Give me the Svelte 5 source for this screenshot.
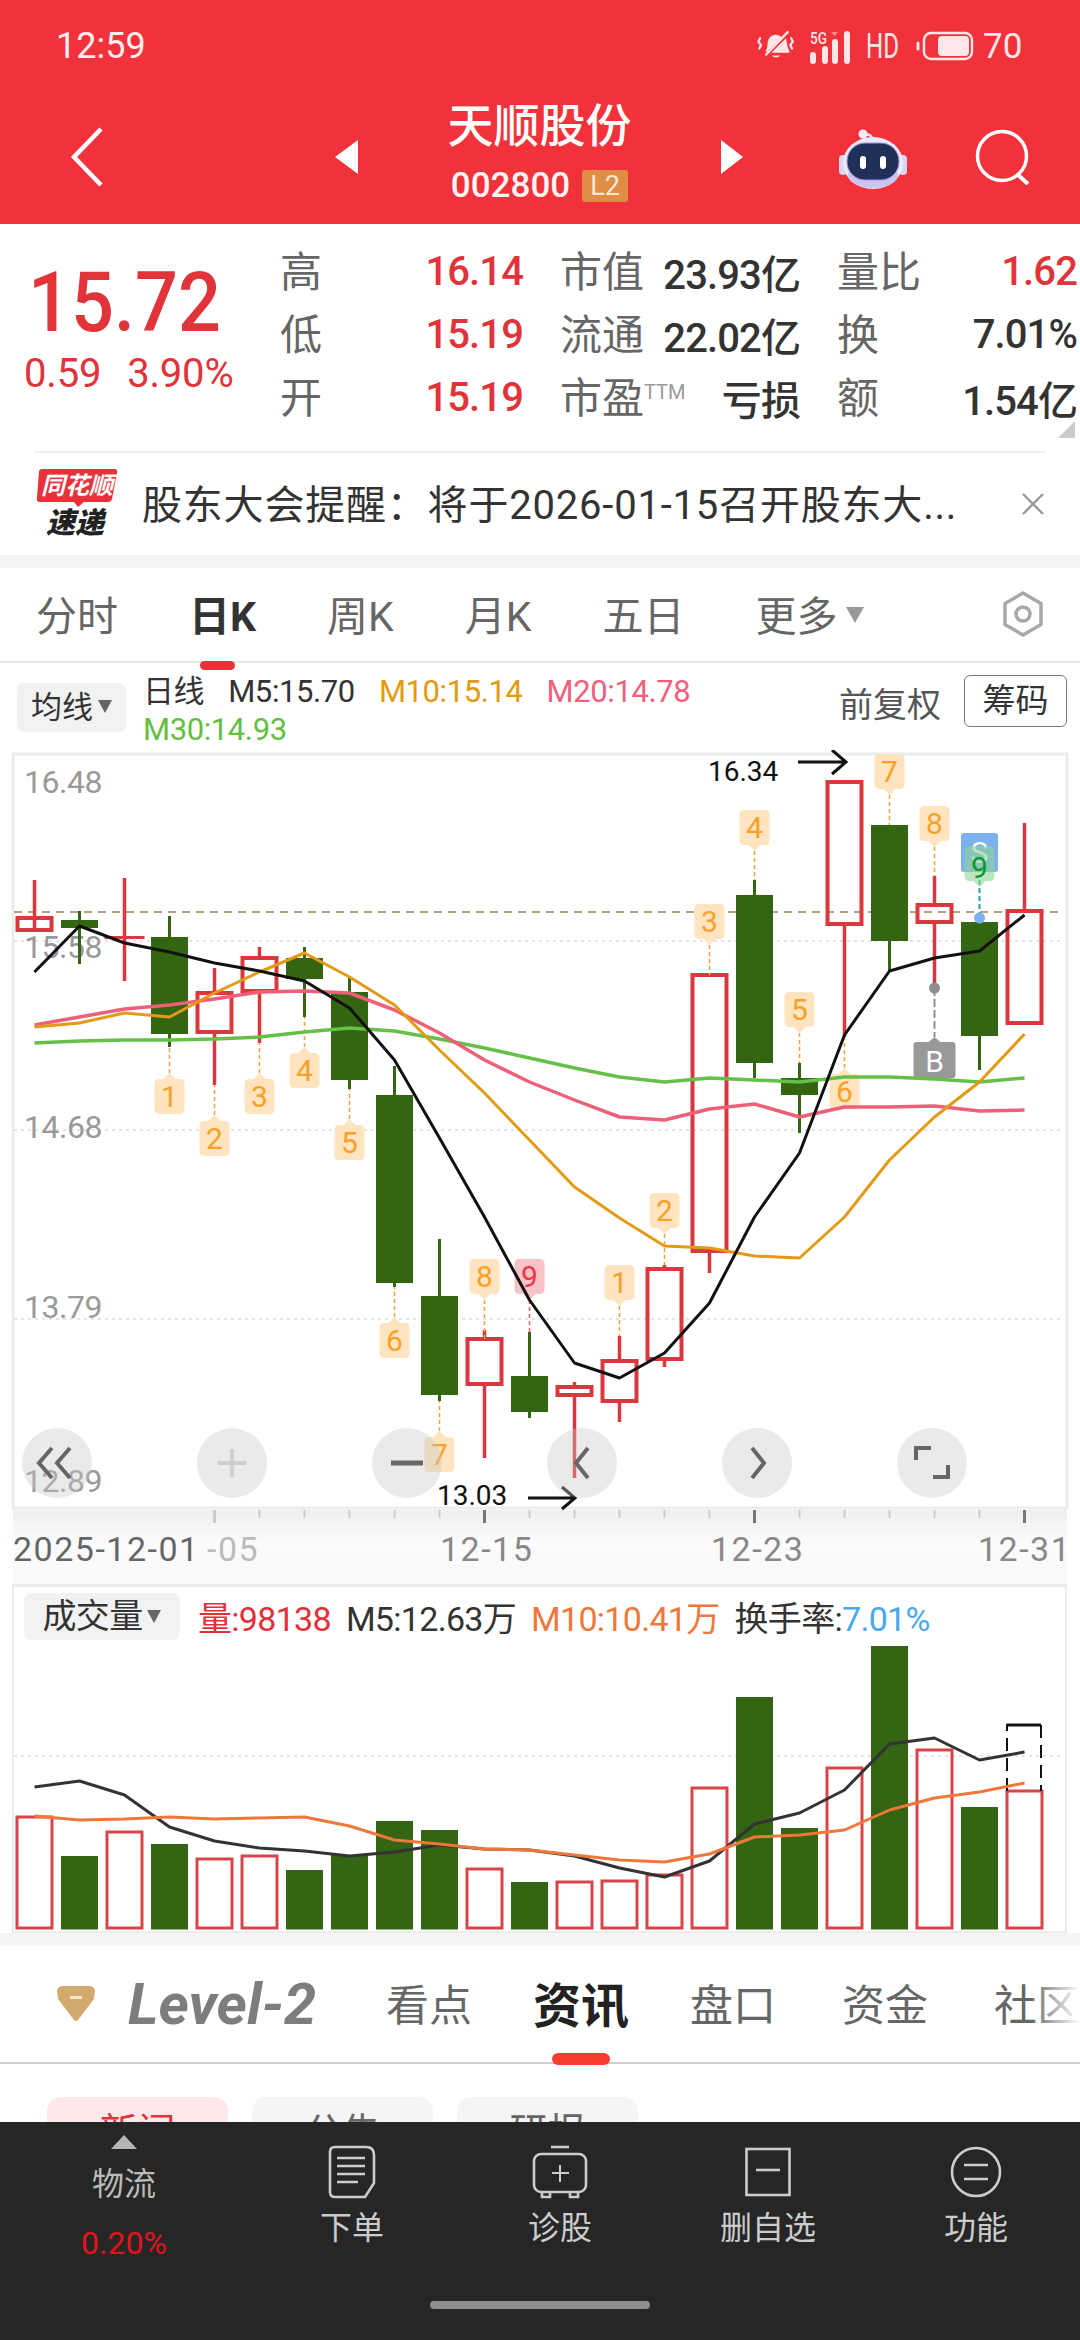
<script>
	const xs = (i) => 34.5 + 45 * i;

	// [bodyTop, bodyBottom, wickTop, wickBottom, isUp]
	const candles = [
		[918, 930, 880, 918, 1], [920, 928, 911, 964, 0], [936, 939, 878, 981, 2], [937, 1034, 916, 1047, 0],
		[993, 1032, 968, 1085, 1], [958, 991, 947, 1043, 1], [958, 979, 947, 1017, 0], [992, 1080, 976, 1089, 0],
		[1095, 1283, 1066, 1287, 0], [1296, 1395, 1239, 1401, 0], [1339, 1384, 1330, 1458, 1], [1376, 1412, 1332, 1418, 0],
		[1387, 1395, 1382, 1478, 1], [1361, 1401, 1336, 1422, 1], [1269, 1359, 1265, 1367, 1], [975, 1251, 975, 1273, 1],
		[895, 1063, 880, 1078, 0], [1078, 1095, 1063, 1133, 0], [782, 924, 782, 1037, 1], [825, 941, 825, 971, 0],
		[905, 922, 876, 987, 1], [922, 1036, 913, 1070, 0], [911, 1023, 823, 1023, 1]
	];

	const line = (ys) => ys.map((y, i) => `${xs(i)},${y}`).join(' ');

	const ma5 = [972, 926, 943, 952, 963, 971, 981, 1008, 1060, 1138, 1217, 1300, 1363, 1378, 1353, 1303, 1217, 1153, 1035, 971, 958, 951, 915];
	const ma10 = [1027, 1023, 1013, 1017, 993, 972, 953, 977, 1005, 1050, 1093, 1140, 1187, 1218, 1246, 1248, 1256, 1258, 1217, 1160, 1117, 1082, 1034];
	const ma20 = [1025, 1017, 1009, 1005, 999, 992, 991, 993, 1010, 1033, 1060, 1082, 1100, 1117, 1120, 1109, 1104, 1117, 1107, 1107, 1106, 1111, 1110];
	const ma30 = [1043, 1041, 1040, 1040, 1039, 1037, 1032, 1028, 1031, 1039, 1048, 1058, 1068, 1077, 1082, 1078, 1080, 1082, 1077, 1077, 1079, 1082, 1078];

	// [index, label, tip y, dotted line other end, pointing up]
	const tags = [
		[3, 1, 1073, 1047, true], [4, 2, 1115, 1085, true], [5, 3, 1073, 1043, true], [6, 4, 1047, 1017, true],
		[7, 5, 1119, 1089, true], [8, 6, 1317, 1287, true], [9, 7, 1431, 1401, true], [18, 6, 1068, 1037, true],
		[10, 8, 1300, 1339, false], [13, 1, 1306, 1336, false], [14, 2, 1234, 1265, false], [15, 3, 945, 975, false],
		[16, 4, 851, 880, false], [17, 5, 1033, 1063, false], [19, 7, 795, 825, false], [20, 8, 847, 876, false]
	];

	function tagPath(x, tip, up) {
		const l = x - 15, r = x + 15;
		if (up) {
			const t = tip + 6, b = tip + 41;
			return `M${x} ${tip}L${x + 6} ${t}H${r - 5}Q${r} ${t} ${r} ${t + 5}V${b - 5}Q${r} ${b} ${r - 5} ${b}H${l + 5}Q${l} ${b} ${l} ${b - 5}V${t + 5}Q${l} ${t} ${l + 5} ${t}H${x - 6}Z`;
		}
		const b = tip - 6, t = tip - 41;
		return `M${x} ${tip}L${x + 6} ${b}H${r - 5}Q${r} ${b} ${r} ${b - 5}V${t + 5}Q${r} ${t} ${r - 5} ${t}H${l + 5}Q${l} ${t} ${l} ${t + 5}V${b - 5}Q${l} ${b} ${l + 5} ${b}H${x - 6}Z`;
	}

	const grid = [941, 1130, 1319];
	const prices = [['16.48', 782], ['15.58', 947], ['14.68', 1127], ['13.79', 1307], ['12.89', 1481]];

	const tabs = ['分时', '日K', '周K', '月K', '五日'];
	const quotes = [
		{ a: '高', b: '16.14', c: '市值', d: '23.93亿', e: '量比', f: '1.62', red: true },
		{ a: '低', b: '15.19', c: '流通', d: '22.02亿', e: '换', f: '7.01%' },
		{ a: '开', b: '15.19', c: '市盈', ttm: true, d: '亏损', e: '额', f: '1.54亿' }
	];

	// volume bars: [top, isUp]
	const vols = [1817, 1856, 1832, 1844, 1859, 1856, 1870, 1855, 1821, 1830, 1869, 1882, 1882, 1881, 1875, 1788, 1697, 1828, 1768, 1646, 1750, 1807, 1791];
	const volUp = [1, 0, 1, 0, 1, 1, 0, 0, 0, 0, 1, 0, 1, 1, 1, 1, 0, 0, 1, 0, 1, 0, 1];
	const volM5 = [1787, 1781, 1795, 1827, 1841, 1848, 1851, 1856, 1852, 1845, 1849, 1850, 1856, 1868, 1877, 1861, 1824, 1813, 1790, 1744, 1738, 1760, 1752];
	const volM10 = [1816, 1820, 1819, 1817, 1819, 1818, 1817, 1826, 1840, 1844, 1849, 1850, 1855, 1860, 1862, 1854, 1837, 1835, 1830, 1810, 1798, 1792, 1783];

	const lowerTabs = ['看点', '资讯', '盘口', '资金'];
</script>

<div class="page">
	<header class="top">
		<div class="status">
			<span class="time">12:59</span>
			<svg class="status-icons" width="290" height="40" viewBox="0 0 290 40">
				<g transform="translate(17 1) scale(0.86)">
					<g fill="none" stroke="#ffe6e8" stroke-width="2.6" stroke-linecap="round">
						<path d="M6 13l-2 4 3 4-2 4" />
						<path d="M42 13l2 4-3 4 2 4" />
						<path d="M13 32L38 6" stroke-width="2.8" />
					</g>
					<path d="M12 28c3-3 2-6 3-11 1-5 5-8 9-8 3 0 5 1 7 3L14 29zM19 30l17-17c1 3 1 9 4 15v2z" fill="#ffe6e8" />
					<path d="M20 33h9c-1 3-8 3-9 0z" fill="#ffe6e8" />
				</g>
				<text x="72" y="18" class="tiny" textLength="17" lengthAdjust="spacingAndGlyphs">5G</text>
				<path d="M93 6h7l-3.500 4z" fill="#ff8b90" />
				<rect x="72" y="26" width="6" height="12" rx="3" fill="#ffe6e8" />
				<rect x="84" y="20" width="6" height="18" rx="3" fill="#ffe6e8" />
				<rect x="94" y="13" width="6" height="25" rx="3" fill="#ffe6e8" />
				<rect x="106" y="5" width="6" height="33" rx="3" fill="#ffe6e8" />
				<text x="128" y="32" class="hd" textLength="33" lengthAdjust="spacingAndGlyphs">HD</text>
				<path d="M180 17v6" stroke="#ffe6e8" stroke-width="3" stroke-linecap="round" />
				<rect x="186" y="7" width="48" height="26" rx="7" fill="none" stroke="#ffe6e8" stroke-width="2.4" />
				<rect x="200" y="10" width="31" height="20" rx="4" fill="#ffe6e8" />
				<text x="245" y="32" class="hd">70</text>
			</svg>
		</div>
		<nav class="nav">
			<svg class="back" width="34" height="60" viewBox="0 0 34 60">
				<path d="M31 2L4 30l27 28" fill="none" stroke="#fff" stroke-width="4.500" />
			</svg>
			<span class="tri left"></span>
			<div class="title">
				<div class="name">天顺股份</div>
				<div class="code"><span>002800</span><span class="l2">L2</span></div>
			</div>
			<span class="tri right"></span>
			<svg class="robot" width="68" height="62" viewBox="0 0 68 62">
				<path d="M25 10c3-4 7-3 9 3" fill="none" stroke="#eadff5" stroke-width="2.500" />
				<circle cx="24" cy="7" r="4.500" fill="#f1ecfa" />
				<rect x="0" y="28" width="8" height="20" rx="4" fill="#d9d5f2" />
				<rect x="60" y="28" width="8" height="20" rx="4" fill="#d9d5f2" />
				<ellipse cx="34" cy="36" rx="30" ry="26" fill="#ecebfb" />
				<ellipse cx="34" cy="48" rx="25" ry="13" fill="#c9c5ef" />
				<rect x="8" y="16" width="52" height="37" rx="18" fill="#1f3158" stroke="#b28ce8" stroke-width="1" />
				<rect x="21" y="29" width="6" height="13" rx="3" fill="#fff" />
				<rect x="41" y="29" width="6" height="13" rx="3" fill="#fff" />
			</svg>
			<svg class="search" width="56" height="56" viewBox="0 0 56 56">
				<circle cx="27" cy="27" r="24.500" fill="none" stroke="#fff" stroke-width="3.500" />
				<path d="M42 45l11 10" stroke="#fff" stroke-width="4" />
			</svg>
		</nav>
	</header>

	<section class="quote">
		<div class="price">
			<div class="big">15.72</div>
			<div class="change"><span>0.59</span><span>3.90%</span></div>
		</div>
		<div class="cells">
			{#each quotes as q}
				<div class="cell"><span class="lab">{q.a}</span><span class="val red">{q.b}</span></div>
				<div class="cell">
					<span class="lab">{q.c}{#if q.ttm}<sup>TTM</sup>{/if}</span><span class="val">{q.d}</span>
				</div>
				<div class="cell"><span class="lab">{q.e}</span><span class="val" class:red={q.red}>{q.f}</span></div>
			{/each}
		</div>
		<span class="corner"></span>
	</section>

	<section class="notice">
		<svg class="logo" width="82" height="74" viewBox="0 0 82 74">
			<path d="M6 2H78Q82 2 81 6L76 32Q75 35 72 35H48L42 40L38 35H4Q0 35 1 31L3 5Q3 2 6 2Z" fill="#e8323a" />
			<text x="41" y="27" class="logo-a" text-anchor="middle">同花顺</text>
			<text x="39" y="66" class="logo-b" text-anchor="middle">速递</text>
		</svg>
		<span class="notice-text">股东大会提醒：将于2026-01-15召开股东大...</span>
		<svg class="close" width="24" height="24" viewBox="0 0 24 24">
			<path d="M2 2l20 20M22 2L2 22" stroke="#999" stroke-width="2.400" />
		</svg>
	</section>

	<div class="gap"></div>

	<section class="periods">
		{#each tabs as t, i}
			<span class="period" class:active={i === 1}>{t}</span>
		{/each}
		<span class="period more">更多<i></i></span>
		<svg class="gear" width="44" height="46" viewBox="0 0 44 46">
			<path d="M22 2l18 10.500v21L22 44 4 33.500v-21z" fill="none" stroke="#a8a8a8" stroke-width="3.500" stroke-linejoin="round" />
			<circle cx="22" cy="23" r="7" fill="none" stroke="#a8a8a8" stroke-width="3.500" />
		</svg>
	</section>

	<section class="legend">
		<div class="pill">均线<i></i></div>
		<div class="ma-values">
			<span class="dark cjk">日线</span>
			<span class="dark">M5:15.70</span>
			<span class="m10">M10:15.14</span>
			<span class="m20">M20:14.78</span>
			<span class="m30">M30:14.93</span>
		</div>
		<span class="adjust">前复权</span>
		<span class="chips-btn">筹码</span>
	</section>

	<div class="chart">
		<svg width="1080" height="834" viewBox="0 750 1080 834">
			<defs>
				<linearGradient id="fade" x1="0" y1="0" x2="0" y2="1">
					<stop offset="0" stop-color="#efefef" />
					<stop offset="0.45" stop-color="#fbfbfb" />
					<stop offset="1" stop-color="#f8f8f8" />
				</linearGradient>
			</defs>
			<rect x="13" y="1510" width="1054" height="74" fill="url(#fade)" />
			<rect x="13" y="754" width="1054" height="754" fill="#fff" stroke="#ececec" stroke-width="3" />

			{#each grid as y}
				<line x1="14" x2="1064" y1={y} y2={y} class="grid" />
			{/each}
			<line x1="14" x2="1064" y1="912" y2="912" class="last" />

			{#each prices as [label, y]}
				<text x="24" y={y + 11} class="axis">{label}</text>
			{/each}

			{#each candles as [top, bottom, wt, wb, up], i}
				{#if up === 0}
					<line x1={xs(i)} x2={xs(i)} y1={wt} y2={wb} class="wick-down" />
					<rect x={xs(i) - 18.5} y={top} width="37" height={bottom - top} fill="#336513" />
				{:else if up === 2}
					<line x1={xs(i)} x2={xs(i)} y1={wt} y2={wb} class="wick-up" />
					<rect x={xs(i) - 20} y={top} width="40" height={bottom - top} fill="#d9383e" />
				{:else}
					<line x1={xs(i)} x2={xs(i)} y1={wt} y2={top} class="wick-up" />
					<line x1={xs(i)} x2={xs(i)} y1={bottom} y2={wb} class="wick-up" />
					<rect x={xs(i) - 17} y={top} width="34" height={bottom - top} class="hollow" />
				{/if}
			{/each}

			{#each tags as [i, n, tip, end, up]}
				<line x1={xs(i)} x2={xs(i)} y1={tip} y2={end} class="dots" />
				<path d={tagPath(xs(i), tip, up)} fill="#ffe4bf" />
				<text x={xs(i)} y={up ? tip + 34 : tip - 13} class="tag-num">{n}</text>
			{/each}

			<line x1={xs(11)} x2={xs(11)} y1="1300" y2="1332" class="dots pink" />
			<path d={tagPath(xs(11), 1300, false)} fill="#f7c3c7" />
			<text x={xs(11)} y="1287" class="tag-num pink-num">9</text>

			<line x1={xs(20)} x2={xs(20)} y1="988" y2="1037" class="b-line" />
			<circle cx={xs(20)} cy="988" r="5.500" fill="#8f8f8f" />
			<path d="M{xs(20)} 1037l6 5h12q3 0 3 3v30q0 3-3 3h-36q-3 0-3-3v-30q0-3 3-3h12z" fill="#999" />
			<text x={xs(20)} y="1072" class="tag-num white">B</text>

			<line x1={xs(21)} x2={xs(21)} y1="880" y2="918" class="s-line" />
			<circle cx={xs(21)} cy="918" r="5.500" fill="#7db0ef" />
			<rect x="961" y="833" width="37" height="39" rx="3" fill="#7db0ef" />
			<text x={xs(21)} y="863" class="tag-num white">S</text>
			<path d={tagPath(xs(21), 887, false)} fill="#8fd694" opacity="0.6" />
			<text x={xs(21)} y="878" class="tag-num nine">9</text>

			<polyline points={line(ma30)} class="ma g30" />
			<polyline points={line(ma20)} class="ma p20" />
			<polyline points={line(ma10)} class="ma o10" />
			<polyline points={line(ma5)} class="ma k5" />

			<text x="708" y="781" class="mark">16.34</text>
			<path d="M798 762h46M832 750l14 12-14 12" class="arrow" />
			<text x="437" y="1505" class="mark">13.03</text>
			<path d="M528 1498h46M562 1487l13 11-13 11" class="arrow" />

			{#each [57, 232, 407, 582, 757, 932] as cx}
				<circle {cx} cy="1463" r="35" fill="#c8c8c8" opacity="0.38" />
			{/each}
			<path d="M52 1448l-13 15 13 15M70 1448l-13 15 13 15" class="ctl" />
			<path d="M232 1449v28M218 1463h28" class="ctl soft" />
			<path d="M391 1463h32" class="ctl thick" />
			<path d="M588 1448l-12 15 12 15" class="ctl" />
			<path d="M752 1448l12 15-12 15" class="ctl" />
			<path d="M916 1460v-12h15M948 1465v12h-15" class="ctl" />

			{#each candles as _, i}
				{#if i >= 4}
					<line x1={xs(i)} x2={xs(i)} y1="1510" y2="1518" class="tick" />
				{/if}
			{/each}
			<line x1={xs(4)} x2={xs(4)} y1="1510" y2="1523" class="tick-big soft" />
			{#each [10, 16, 22] as i}
				<line x1={xs(i)} x2={xs(i)} y1="1510" y2="1523" class="tick-big" />
			{/each}
			<text x="13" y="1561" class="date dark-date">2025-12-01</text>
			<text x="207" y="1561" class="date soft-date">-05</text>
			<text x="440" y="1561" class="date">12-15</text>
			<text x="711" y="1561" class="date">12-23</text>
			<text x="978" y="1561" class="date">12-31</text>
		</svg>
	</div>

	<section class="volume">
		<div class="vol-legend">
			<div class="pill vol-pill">成交量<i></i></div>
			<span class="v-red">量:98138</span>
			<span class="dark">M5:12.63万</span>
			<span class="v-orange">M10:10.41万</span>
			<span class="dark">换手率:<b>7.01%</b></span>
		</div>
		<svg width="1051" height="285" viewBox="14 1646 1051 285">
			<line x1="14" x2="1064" y1="1756" y2="1756" class="grid" />
			{#each vols as top, i}
				{#if volUp[i]}
					<rect x={xs(i) - 17.500} y={top} width="35" height={1928 - top} class="vol-hollow" />
				{:else}
					<rect x={xs(i) - 18.500} y={top} width="37" height={1929.500 - top} fill="#336513" />
				{/if}
			{/each}
			<path d="M1007 1791v-66h34v66" fill="none" stroke="#111" stroke-width="2" stroke-dasharray="13 7" />
			<line x1="1007" x2="1041" y1="1725" y2="1725" stroke="#111" stroke-width="3" />
			<polyline points={line(volM5)} class="ma v5" />
			<polyline points={line(volM10)} class="ma v10" />
		</svg>
	</section>

	<div class="gap"></div>

	<section class="lower-tabs">
		<svg class="diamond" width="40" height="36" viewBox="0 0 40 36">
			<path d="M7 0H33Q38 0 39 5L38 13L22 34Q20 36 18 34L2 13L1 5Q2 0 7 0Z" fill="#d2aa6e" />
			<rect x="14" y="10" width="12" height="3" fill="#f5e6cc" />
		</svg>
		<span class="level">Level-2</span>
		{#each lowerTabs as t, i}
			<span class="l-tab" class:on={i === 1}><span class="l-text">{t}</span></span>
		{/each}
		<span class="l-tab"><span class="l-text">社区</span></span>
	</section>

	<section class="chips">
		<span class="chip hot">新闻</span>
		<span class="chip">公告</span>
		<span class="chip">研报</span>
	</section>

	<footer class="bottom">
		<div class="actions">
			<div class="action ticker">
				<span class="up"></span>
				<span class="sector">物流</span>
				<span class="pct">0.20%</span>
			</div>
			<div class="action">
				<svg width="48" height="54" viewBox="0 0 48 54">
					<path d="M7 2H38Q46 2 46 10V38L37 52H7Q2 52 2 47V7Q2 2 7 2Z" class="ic" />
					<path d="M9 13h28M9 21h28M9 29h28M9 37h21" class="ic" />
				</svg>
				<span>下单</span>
			</div>
			<div class="action">
				<svg width="56" height="54" viewBox="0 0 56 54">
					<path d="M19 2h18" class="ic" />
					<rect x="2" y="9" width="52" height="38" rx="7" class="ic" />
					<path d="M28 20v17M20 28h17" class="ic thin" />
					<path d="M10 47v5h8v-5M38 47v5h8v-5" class="ic" />
				</svg>
				<span>诊股</span>
			</div>
			<div class="action">
				<svg width="46" height="54" viewBox="0 0 46 54">
					<rect x="1.500" y="4" width="43" height="46" class="ic" />
					<path d="M11 25h24" class="ic" />
				</svg>
				<span>删自选</span>
			</div>
			<div class="action">
				<svg width="52" height="54" viewBox="0 0 52 54">
					<circle cx="26" cy="27" r="24" class="ic" />
					<path d="M14 20h24M14 34h24" class="ic" />
				</svg>
				<span>功能</span>
			</div>
		</div>
		<div class="home-bar"></div>
	</footer>
</div>

<style>
	:global(body) {
		margin: 0;
		background: #fff;
	}

	.page {
		position: relative;
		width: 1080px;
		height: 2340px;
		overflow: hidden;
		background: #fff;
		font-family: Roboto, 'Noto Sans CJK SC', sans-serif;
		color: #333;
	}

	/* red header */
	.top {
		height: 224px;
		background: #f1323b;
		color: #fff;
	}

	.status {
		display: flex;
		justify-content: space-between;
		align-items: center;
		height: 92px;
		padding: 0 0 0 56px;
	}

	.time {
		font-size: 36px;
		color: #ffeef0;
	}

	.status-icons {
		margin-right: 52px;
	}

	.tiny {
		font: 500 17px Roboto, sans-serif;
		fill: #ffe6e8;
	}

	.hd {
		font: 400 35px Roboto, sans-serif;
		fill: #ffe6e8;
	}

	.nav {
		display: flex;
		align-items: flex-start;
		padding-left: 70px;
	}

	.back {
		margin-top: 35px;
	}

	.tri {
		width: 0;
		height: 0;
		margin-top: 48px;
		border-top: 17px solid transparent;
		border-bottom: 17px solid transparent;
	}

	.tri.left {
		margin-left: 231px;
		border-right: 23px solid #fff;
	}

	.tri.right {
		border-left: 22px solid #fff;
	}

	.title {
		width: 363px;
		text-align: center;
	}

	.name {
		margin-top: 2px;
		font-size: 46px;
		line-height: 64px;
		font-weight: 500;
		white-space: nowrap;
	}

	.code {
		display: flex;
		justify-content: center;
		align-items: center;
		gap: 12px;
		margin-top: 8px;
		font-size: 35px;
		font-weight: 500;
		line-height: 40px;
		color: #fff5f5;
	}

	.l2 {
		width: 46px;
		height: 32px;
		border-radius: 3px;
		background: #e08d46;
		color: #fde9d5;
		font-size: 27px;
		font-weight: 400;
		line-height: 32px;
	}

	.robot {
		margin: 35px 0 0 96px;
	}

	.search {
		margin: 37px 0 0 68px;
	}

	/* quote */
	.quote {
		position: relative;
		display: flex;
		height: 227px;
		padding-top: 16px;
		box-sizing: border-box;
	}

	.price {
		width: 280px;
		flex: none;
		color: #e0333a;
	}

	.big {
		margin: 16px 0 0 28px;
		font-size: 84px;
		line-height: 94px;
		font-weight: 500;
		white-space: nowrap;
		transform: scaleX(0.9);
		transform-origin: left center;
	}

	.change {
		display: flex;
		gap: 26px;
		margin: 2px 0 0 24px;
		font-size: 40px;
		line-height: 44px;
		letter-spacing: -0.2px;
		white-space: nowrap;
	}

	.cells {
		display: grid;
		grid-template-columns: 243px 240px 240px;
		grid-auto-rows: 63px;
		column-gap: 37px;
	}

	.cell {
		display: flex;
		justify-content: space-between;
		align-items: center;
		white-space: nowrap;
	}

	.lab {
		margin-bottom: 7px;
		font-size: 42px;
		color: #666;
	}

	.lab sup {
		font-size: 20px;
		color: #999;
		vertical-align: 14px;
		line-height: 0;
	}

	.val {
		font-size: 40px;
		font-weight: 500;
		color: #333;
		letter-spacing: -0.9px;
	}

	.val.red {
		color: #e0333a;
	}

	.corner {
		position: absolute;
		right: 5px;
		bottom: 13px;
		width: 0;
		height: 0;
		border-left: 17px solid transparent;
		border-bottom: 17px solid #ccc;
	}

	.notice {
		display: flex;
		align-items: center;
		height: 104px;
		margin: 0 35px;
		border-top: 2px solid #eee;
		box-sizing: border-box;
	}

	.logo {
		flex: none;
		margin: 0 0 0 1px;
	}

	.logo-a {
		font: italic 700 24px 'Noto Sans CJK SC', sans-serif;
		fill: #fff;
	}

	.logo-b {
		font: italic 900 29px 'Noto Sans CJK SC', sans-serif;
		fill: #222;
	}

	.notice-text {
		flex: 1;
		margin: 0 0 5px 24px;
		font-size: 40px;
		letter-spacing: 0.8px;
		color: #333;
		white-space: nowrap;
	}

	.close {
		flex: none;
	}

	.gap {
		height: 13px;
		background: #f5f5f5;
	}

	/* period tabs */
	.periods {
		display: flex;
		align-items: center;
		gap: 71px;
		height: 93px;
		padding-left: 36px;
		border-bottom: 2px solid #e8e8e8;
		position: relative;
		box-sizing: content-box;
	}

	.period {
		position: relative;
		margin-bottom: 4px;
		font-size: 41px;
		color: #666;
		white-space: nowrap;
	}

	.period.active {
		font-weight: 700;
		color: #333;
	}

	.period.active::after {
		content: '';
		position: absolute;
		left: 11px;
		bottom: -27px;
		width: 35px;
		height: 9px;
		border-radius: 5px;
		background: #e8323a;
	}

	.more i,
	.pill i {
		display: inline-block;
		width: 0;
		height: 0;
		margin-left: 8px;
		border-left: 9px solid transparent;
		border-right: 9px solid transparent;
		border-top: 16px solid #999;
		vertical-align: 8px;
	}

	.gear {
		position: absolute;
		left: 1001px;
		top: 23px;
	}

	/* legend */
	.legend {
		display: flex;
		align-items: flex-start;
		height: 87px;
		padding: 10px 13px 0 17px;
		box-sizing: border-box;
		font-size: 31px;
		white-space: nowrap;
	}

	.pill {
		flex: none;
		width: 109px;
		height: 49px;
		margin-top: 10px;
		border-radius: 7px;
		background: #f2f2f2;
		font-size: 31px;
		line-height: 49px;
		text-align: center;
		color: #333;
	}

	.pill i {
		margin-left: 5px;
		border-left-width: 7px;
		border-right-width: 7px;
		border-top-width: 13px;
		border-top-color: #666;
		vertical-align: 5px;
	}

	.ma-values {
		display: flex;
		flex-wrap: wrap;
		column-gap: 24px;
		width: 620px;
		margin-left: 17px;
		line-height: 38px;
		letter-spacing: -0.4px;
	}

	.ma-values .m30 {
		width: 100%;
		color: #62c03e;
	}

	.dark {
		color: #333;
	}

	.cjk {
		font-size: 31px;
	}

	.m10 {
		color: #e39a0c;
	}

	.m20 {
		color: #f05f7c;
	}

	.adjust {
		margin: 5px 0 0 auto;
		font-size: 34px;
		color: #555;
	}

	.chips-btn {
		flex: none;
		width: 103px;
		height: 52px;
		margin: 2px 0 0 23px;
		border: 1.5px solid #777;
		border-radius: 6px;
		box-sizing: border-box;
		font-size: 33px;
		line-height: 50px;
		text-align: center;
		color: #333;
	}

	.chart,
	.chart svg,
	.volume svg {
		display: block;
	}

	/* chart strokes */
	.grid {
		stroke: #e4e4e4;
		stroke-width: 2;
		stroke-dasharray: 3 4;
	}

	.last {
		stroke: #b9a27c;
		stroke-width: 2;
		stroke-dasharray: 8 6;
	}

	.axis {
		font: 400 32px Roboto, sans-serif;
		fill: #999;
		letter-spacing: -0.5px;
	}

	.wick-down {
		stroke: #336513;
		stroke-width: 3;
	}

	.wick-up {
		stroke: #d9383e;
		stroke-width: 3.5;
	}

	.hollow {
		fill: none;
		stroke: #d9383e;
		stroke-width: 4;
	}

	.dots {
		stroke: #eea63a;
		stroke-width: 1.5;
		stroke-dasharray: 4 3;
	}

	.dots.pink {
		stroke: #e06070;
	}

	.tag-num {
		font: 400 30px Roboto, sans-serif;
		fill: #f7a128;
		text-anchor: middle;
	}

	.pink-num {
		fill: #ee3344;
	}

	.white {
		fill: #fff;
	}

	.nine {
		fill: #0a9a2a;
	}

	.b-line {
		stroke: #8f8f8f;
		stroke-width: 2;
		stroke-dasharray: 8 3;
	}

	.s-line {
		stroke: #2c9f9c;
		stroke-width: 2;
		stroke-dasharray: 5 3;
	}

	.ma {
		fill: none;
		stroke-width: 3;
		stroke-linejoin: round;
		stroke-linecap: butt;
	}

	.g30 {
		stroke: #65c048;
		stroke-width: 3.5;
	}

	.p20 {
		stroke: #ee6078;
		stroke-width: 3.5;
	}

	.o10 {
		stroke: #e39a14;
	}

	.k5 {
		stroke: #111;
	}

	.mark {
		font: 400 28px Roboto, sans-serif;
		fill: #111;
	}

	.arrow {
		fill: none;
		stroke: #111;
		stroke-width: 3;
	}

	.ctl {
		fill: none;
		stroke: #666;
		stroke-width: 4;
	}

	.ctl.soft {
		stroke: #cfcfcf;
	}

	.ctl.thick {
		stroke-width: 5;
	}

	.tick {
		stroke: #ccc;
		stroke-width: 2;
	}

	.tick-big {
		stroke: #777;
		stroke-width: 3;
	}

	.tick-big.soft {
		stroke: #ccc;
	}

	.date {
		font: 400 34px Roboto, sans-serif;
		letter-spacing: 1.5px;
		fill: #888;
	}

	.dark-date {
		fill: #666;
	}

	.soft-date {
		fill: #bbb;
	}

	/* volume */
	.volume {
		width: 1051px;
		height: 344px;
		margin-left: 12px;
		border: solid #ececec;
		border-width: 3px 2px 2px;
	}

	.vol-legend {
		display: flex;
		align-items: center;
		gap: 15px;
		height: 59px;
		padding-left: 10px;
		font-size: 34px;
		letter-spacing: -0.7px;
		white-space: nowrap;
	}

	.vol-pill {
		width: 156px;
		height: 47px;
		margin: 0 3px 0 0;
		font-size: 34px;
		line-height: 47px;
	}

	.v-red {
		color: #e0313a;
	}

	.v-orange {
		color: #f0773a;
	}

	.vol-legend b {
		font-weight: 400;
		color: #4aa8ee;
	}

	.vol-hollow {
		fill: none;
		stroke: #d9434a;
		stroke-width: 3;
	}

	.v5 {
		stroke: #333;
	}

	.v10 {
		stroke: #f0773a;
	}

	/* lower tabs */
	.lower-tabs {
		position: relative;
		display: flex;
		align-items: center;
		height: 116px;
		padding-left: 56px;
		border-bottom: 2px solid #cfcfcf;
		white-space: nowrap;
	}

	.lower-tabs::after {
		content: '';
		position: absolute;
		right: 0;
		top: 20px;
		width: 50px;
		height: 80px;
		background: linear-gradient(to right, rgba(255, 255, 255, 0), #fff);
	}

	.diamond {
		flex: none;
	}

	.level {
		flex: none;
		width: 203px;
		margin: 0 22px 0 32px;
		font-size: 58px;
		font-style: italic;
		font-weight: 700;
		color: #7d7d7d;
	}

	.l-tab {
		flex: none;
		position: relative;
		width: 152px;
		text-align: center;
		font-size: 43px;
		color: #666;
	}

	.l-text {
		display: block;
		margin-bottom: 5px;
	}

	.l-tab.on {
		font-size: 48px;
		font-weight: 700;
		color: #222;
	}

	.l-tab.on::after {
		content: '';
		position: absolute;
		left: 47px;
		bottom: -23px;
		width: 58px;
		height: 12px;
		border-radius: 6px;
		background: #f93c30;
	}

	.chips {
		display: flex;
		gap: 24px;
		margin: 33px 0 0 47px;
	}

	.chip {
		width: 181px;
		height: 70px;
		border-radius: 14px;
		background: #f5f5f5;
		font-size: 38px;
		line-height: 70px;
		text-align: center;
		color: #666;
	}

	.chip.hot {
		background: #ffe8ea;
		color: #e0333a;
	}

	/* dark bottom bar */
	.bottom {
		position: absolute;
		left: 0;
		right: 0;
		bottom: 0;
		height: 218px;
		background: #262626;
		color: #ccc;
	}

	.actions {
		display: grid;
		grid-template-columns: 248px repeat(4, 208px);
		padding-top: 23px;
	}

	.action {
		display: flex;
		flex-direction: column;
		align-items: center;
		font-size: 32px;
		line-height: 44px;
	}

	.action svg {
		margin-bottom: 7px;
	}

	.ic {
		fill: none;
		stroke: #ccc;
		stroke-width: 2.6;
	}

	.ic.thin {
		stroke-width: 2;
	}

	.ticker {
		margin-top: -10px;
	}

	.up {
		width: 0;
		height: 0;
		border-left: 13px solid transparent;
		border-right: 13px solid transparent;
		border-bottom: 14px solid #b5b5b5;
	}

	.sector {
		margin-top: 13px;
		color: #bbb;
	}

	.pct {
		margin-top: 15px;
		color: #e0141a;
	}

	.home-bar {
		position: absolute;
		left: 430px;
		top: 179px;
		width: 220px;
		height: 8px;
		border-radius: 4px;
		background: #8f8f8f;
	}
</style>
